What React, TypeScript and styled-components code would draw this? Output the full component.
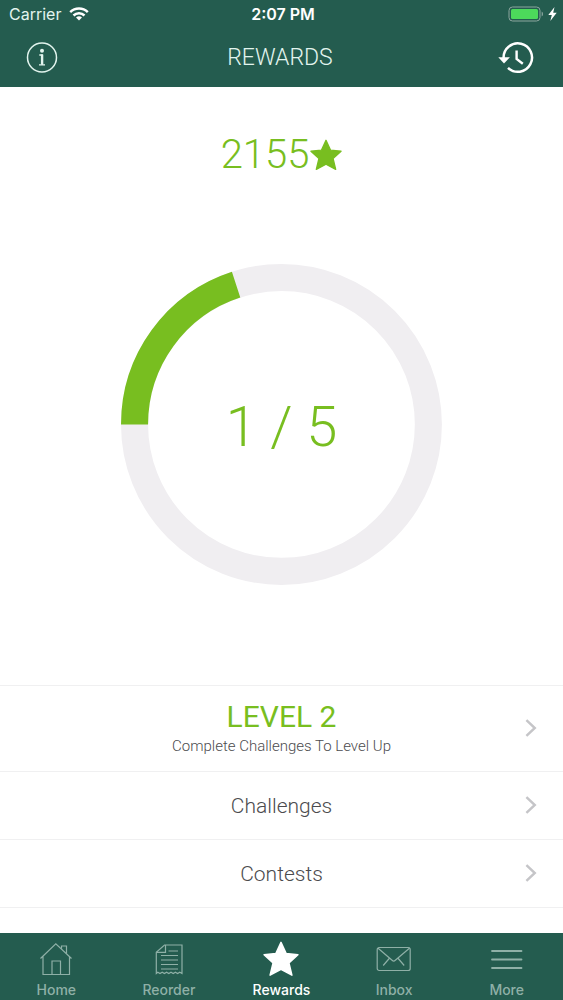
import React from "react";
import styled, { createGlobalStyle } from "styled-components";

const colors = {
  forest: "#245c4f",
  lime: "#78be20",
  track: "#f0eef1",
  line: "#f0f0f1",
  ink: "#4b4b4e",
  muted: "#8fb0a7",
  pale: "#e2f4ee",
};

const GlobalStyle = createGlobalStyle`
  *, *::before, *::after { box-sizing: border-box; }
  body {
    margin: 0;
    background: #fff;
    font-family: Roboto, "Liberation Sans", sans-serif;
    font-weight: 300;
  }
`;

const Screen = styled.div`
  display: flex;
  flex-direction: column;
  min-height: 100vh;
`;

const Header = styled.header`
  background: ${colors.forest};
  color: ${colors.pale};
`;

const StatusBar = styled.div`
  display: grid;
  grid-template-columns: 1fr auto 1fr;
  align-items: center;
  height: 28px;
  padding: 0 6px 0 9px;
  font-family: Inter, "Liberation Sans", sans-serif;
  font-size: 16px;
  font-weight: 400;
`;

const StatusGroup = styled.div<{ $end?: boolean }>`
  display: flex;
  align-items: center;
  justify-content: ${(p) => (p.$end ? "flex-end" : "flex-start")};
  gap: ${(p) => (p.$end ? "4px" : "8px")};
`;

const Clock = styled.time`
  font-weight: 600;
  color: #fff;
`;

const TitleBar = styled.div`
  display: grid;
  grid-template-columns: 1fr auto 1fr;
  align-items: center;
  height: 59px;
  padding: 0 29px 0 26px;
`;

const Title = styled.h1`
  margin: 0;
  font-size: 23px;
  line-height: 28px;
  font-weight: 300;
`;

const IconButton = styled.button<{ $end?: boolean }>`
  display: flex;
  justify-self: ${(p) => (p.$end ? "end" : "start")};
  padding: 0;
  border: 0;
  background: none;
  color: inherit;
  cursor: pointer;
`;

const Main = styled.main`
  flex: 1;
`;

const Summary = styled.section`
  display: flex;
  flex-direction: column;
  align-items: center;
  gap: 85px;
  padding: 44px 0 100px;
  color: ${colors.lime};
`;

const Points = styled.p`
  display: flex;
  align-items: center;
  gap: 1px;
  margin: 0;
  font-size: 40px;
  line-height: 48px;
`;

const Gauge = styled.div`
  display: grid;
  place-items: center;
  width: 57%;
  max-width: 420px;

  > * { grid-area: 1 / 1; }
  > svg { display: block; width: 100%; height: auto; }
`;

const GaugeValue = styled.span`
  padding-top: 6px;
  font-size: 56px;
  line-height: 64px;
`;

const List = styled.ul`
  margin: 0;
  padding: 0;
  list-style: none;
  border-top: 1px solid ${colors.line};
`;

const Row = styled.a<{ $tall?: boolean }>`
  display: grid;
  grid-template-columns: 1fr auto 1fr;
  align-items: center;
  height: ${(p) => (p.$tall ? "86px" : "68px")};
  padding: 0 26px;
  border-bottom: 1px solid ${colors.line};
  color: ${colors.ink};
  text-decoration: none;

  > svg { grid-column: 3; justify-self: end; }
`;

const RowText = styled.span`
  grid-column: 2;
  padding-top: 2px;
  text-align: center;
  font-size: 21px;
  line-height: 24px;
`;

const Level = styled.strong`
  display: block;
  font-size: 30px;
  line-height: 34px;
  font-weight: 400;
  color: ${colors.lime};
`;

const Hint = styled.small`
  display: block;
  font-size: 15px;
  line-height: 24px;
`;

const TabBar = styled.nav`
  display: grid;
  grid-template-columns: repeat(5, 1fr);
  height: 67px;
  background: ${colors.forest};
`;

const Tab = styled.a<{ $active?: boolean }>`
  display: flex;
  flex-direction: column;
  align-items: center;
  gap: 4px;
  padding-top: 8px;
  color: ${(p) => (p.$active ? "#fff" : colors.muted)};
  font-family: Inter, "Liberation Sans", sans-serif;
  font-size: 14px;
  line-height: 18px;
  font-weight: 500;
  text-decoration: none;
`;

const Star = ({ size }: { size: number }) => (
  <svg width={size} height={size} viewBox="0 0 34 34" fill="currentColor" stroke="currentColor" strokeWidth="1.4" strokeLinejoin="round" aria-hidden="true">
    <path d="M17 1.3l4.9 10.6 11.1 1-8.5 7.8 2.8 11.6L17 26.7 6.7 32.3l2.8-11.6L1 12.9l11.1-1z" />
  </svg>
);

const Wifi = () => (
  <svg width="20" height="14" viewBox="0 0 20 14" fill="none" stroke="#fff" strokeWidth="2.5" aria-hidden="true">
    <path d="M1.2 5.2a12.5 12.5 0 0 1 17.6 0M4.5 8.5a7.8 7.8 0 0 1 11 0" />
    <path d="M10 13.6l-3-3a4.3 4.3 0 0 1 6 0z" fill="#fff" stroke="none" />
  </svg>
);

const Battery = () => (
  <svg width="36" height="16" viewBox="0 0 36 16" aria-hidden="true">
    <rect x="1" y="1" width="31" height="14" rx="3.5" fill="none" stroke="#8ca69f" />
    <rect x="3" y="3" width="27" height="10" rx="1.5" fill="#4cd95b" />
    <path d="M33.7 5.5a3 3 0 0 1 0 5z" fill="#8ca69f" />
  </svg>
);

const Bolt = () => (
  <svg width="9" height="14" viewBox="0 0 9 14" fill="#fff" aria-hidden="true">
    <path d="M6.5 0L.3 8h3.5L2.3 14 8.7 5.8H5.2z" />
  </svg>
);

const Info = () => (
  <svg width="32" height="32" viewBox="0 0 32 32" fill="none" stroke="currentColor" aria-hidden="true">
    <circle cx="16" cy="15.5" r="14.5" strokeWidth="1.5" />
    <circle cx="16" cy="8.8" r="2" fill="currentColor" stroke="none" />
    <path d="M13.3 13h2.9v9.5M13 22.9h6" strokeWidth="1.4" />
    <path d="M16.1 12.5v10" strokeWidth="2.4" />
  </svg>
);

const History = () => (
  <svg width="36" height="32" viewBox="0 0 36 32" fill="none" stroke="#fff" aria-hidden="true">
    <path d="M5.6 16A14.2 14.2 0 1 1 10 25.9" strokeWidth="2.5" />
    <path d="M.3 15.2h11.6L6 21.5z" fill="#fff" stroke="none" />
    <path d="M18.6 8.5V17l6.2 4.8" strokeWidth="2.4" />
  </svg>
);

const Chevron = () => (
  <svg width="12" height="18" viewBox="0 0 12 18" fill="none" stroke="#c5c5c8" strokeWidth="2.4" aria-hidden="true">
    <path d="M1.4 1.2L9.8 9l-8.4 7.8" />
  </svg>
);

const TabIcon = styled.svg.attrs({
  width: 36,
  height: 36,
  viewBox: "0 0 36 36",
  fill: "none",
  stroke: "currentColor",
  strokeWidth: 1.2,
  "aria-hidden": true,
})``;

const HomeIcon = () => (
  <TabIcon>
    <path d="M2.5 17.5L17.8 2.8 33.5 17.5M5 15.3v18.2h26.5V15.3" />
    <path d="M14 33.5V20h8.5v13.5M23.5 7.8V5h5v7.5" />
  </TabIcon>
);

const ReorderIcon = () => (
  <TabIcon>
    <path d="M13.5 4h17.5v28.5l-2.2-1.3-2.2 1.3-2.2-1.3-2.2 1.3-2.2-1.3-2.2 1.3-2.2-1.3-2.2 1.3-2.2-1.3-2.2 1.3-2.2-1.3-1.5 1.3V11.3z" />
    <path d="M14.5 4v7.3h-9M17.5 10H27M10 14.5h17M10 19h17M10 23.5h17M10 28h17" />
  </TabIcon>
);

const InboxIcon = () => (
  <TabIcon>
    <rect x="1.2" y="6.5" width="33" height="23" rx="2" />
    <path d="M1.8 7l14.3 12.3a2.4 2.4 0 0 0 3.2 0L33.7 7M13.2 17.5l-6 7M22.2 17.5l6 7" />
  </TabIcon>
);

const MoreIcon = () => (
  <TabIcon strokeLinecap="round">
    <path d="M3 10h29.5M3 18.5h29.5M3 27h29.5" strokeWidth="1.8" />
  </TabIcon>
);

const tabs = [
  { label: "Home", icon: <HomeIcon /> },
  { label: "Reorder", icon: <ReorderIcon /> },
  { label: "Rewards", icon: <Star size={36} />, active: true },
  { label: "Inbox", icon: <InboxIcon /> },
  { label: "More", icon: <MoreIcon /> },
];

const Progress = ({ value, total }: { value: number; total: number }) => (
  <Gauge>
    <svg viewBox="0 0 320 320" fill="none" strokeWidth="27" aria-hidden="true">
      <circle cx="160" cy="160" r="146.5" stroke={colors.track} />
      <circle
        cx="160"
        cy="160"
        r="146.5"
        stroke={colors.lime}
        pathLength={total}
        strokeDasharray={`${value} ${total - value}`}
        transform="rotate(180 160 160)"
      />
    </svg>
    <GaugeValue>
      {value} / {total}
    </GaugeValue>
  </Gauge>
);

export default function App() {
  return (
    <Screen>
      <GlobalStyle />
      <Header>
        <StatusBar>
          <StatusGroup>
            Carrier
            <Wifi />
          </StatusGroup>
          <Clock>2:07 PM</Clock>
          <StatusGroup $end>
            <Battery />
            <Bolt />
          </StatusGroup>
        </StatusBar>
        <TitleBar>
          <IconButton aria-label="Information">
            <Info />
          </IconButton>
          <Title>REWARDS</Title>
          <IconButton aria-label="History" $end>
            <History />
          </IconButton>
        </TitleBar>
      </Header>
      <Main>
        <Summary>
          <Points>
            2155
            <Star size={32} />
          </Points>
          <Progress value={1} total={5} />
        </Summary>
        <List>
          <li>
            <Row href="#level" $tall>
              <RowText>
                <Level>LEVEL 2</Level>
                <Hint>Complete Challenges To Level Up</Hint>
              </RowText>
              <Chevron />
            </Row>
          </li>
          <li>
            <Row href="#challenges">
              <RowText>Challenges</RowText>
              <Chevron />
            </Row>
          </li>
          <li>
            <Row href="#contests">
              <RowText>Contests</RowText>
              <Chevron />
            </Row>
          </li>
        </List>
      </Main>
      <TabBar>
        {tabs.map((tab) => (
          <Tab key={tab.label} href={`#${tab.label.toLowerCase()}`} $active={tab.active}>
            {tab.icon}
            {tab.label}
          </Tab>
        ))}
      </TabBar>
    </Screen>
  );
}
